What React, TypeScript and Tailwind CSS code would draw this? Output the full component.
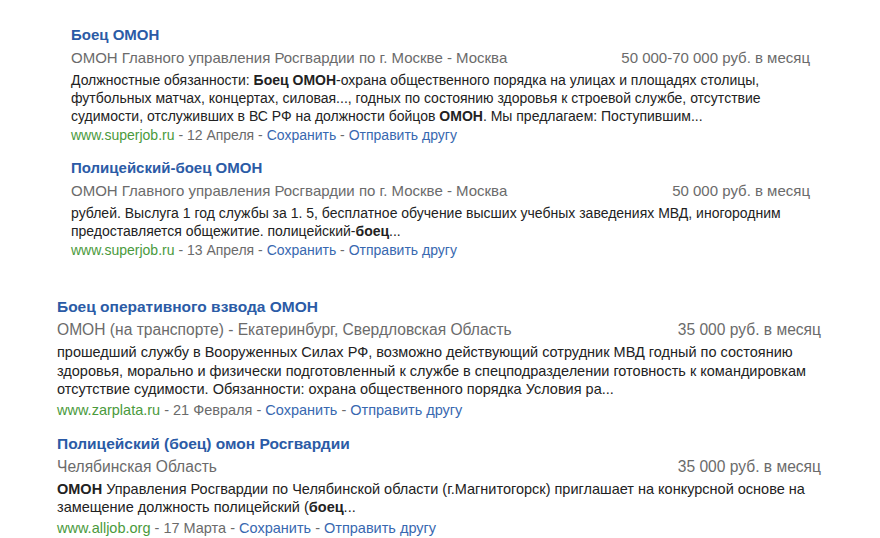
import React from 'react';

interface Vacancy {
  title: string;
  company: string;
  salary: string;
  lines: React.ReactNode[];
  site: string;
  date: string;
}

const first: Vacancy[] = [
  {
    title: 'Боец ОМОН',
    company: 'ОМОН Главного управления Росгвардии по г. Москве - Москва',
    salary: '50 000-70 000 руб. в месяц',
    lines: [
      <>Должностные обязанности: <b>Боец ОМОН</b>-охрана общественного порядка на улицах и площадях столицы,</>,
      <>футбольных матчах, концертах, силовая..., годных по состоянию здоровья к строевой службе, отсутствие</>,
      <>судимости, отслуживших в ВС РФ на должности бойцов <b>ОМОН</b>. Мы предлагаем: Поступившим...</>,
    ],
    site: 'www.superjob.ru',
    date: '12 Апреля',
  },
  {
    title: 'Полицейский-боец ОМОН',
    company: 'ОМОН Главного управления Росгвардии по г. Москве - Москва',
    salary: '50 000 руб. в месяц',
    lines: [
      <>рублей. Выслуга 1 год службы за 1. 5, бесплатное обучение высших учебных заведениях МВД, иногородним</>,
      <>предоставляется общежитие. полицейский-<b>боец</b>...</>,
    ],
    site: 'www.superjob.ru',
    date: '13 Апреля',
  },
];

const second: Vacancy[] = [
  {
    title: 'Боец оперативного взвода ОМОН',
    company: 'ОМОН (на транспорте) - Екатеринбург, Свердловская Область',
    salary: '35 000 руб. в месяц',
    lines: [
      <>прошедший службу в Вооруженных Силах РФ, возможно действующий сотрудник МВД годный по состоянию</>,
      <>здоровья, морально и физически подготовленный к службе в спецподразделении готовность к командировкам</>,
      <>отсутствие судимости. Обязанности: охрана общественного порядка Условия ра...</>,
    ],
    site: 'www.zarplata.ru',
    date: '21 Февраля',
  },
  {
    title: 'Полицейский (боец) омон Росгвардии',
    company: 'Челябинская Область',
    salary: '35 000 руб. в месяц',
    lines: [
      <><b>ОМОН</b> Управления Росгвардии по Челябинской области (г.Магнитогорск) приглашает на конкурсной основе на</>,
      <>замещение должность полицейский (<b>боец</b>...</>,
    ],
    site: 'www.alljob.org',
    date: '17 Марта',
  },
];

// second block of the screenshot is scaled up a little, so fonts go up ~4%
function VacancyItem({ v, big }: { v: Vacancy; big?: boolean }) {
  return (
    <div className="flex flex-col">
      <div className={`font-bold leading-[18px] text-[#2b5ba6] ${big ? 'text-[15.5px]' : 'text-[15px]'}`}>
        {v.title}
      </div>
      <div
        className={`mt-[5px] flex items-center justify-between leading-[18px] text-[#6b6b6b] ${
          big ? 'text-[15.6px]' : 'text-[15px]'
        }`}
      >
        <span>{v.company}</span>
        <span>{v.salary}</span>
      </div>
      <div
        className={`mt-[4px] text-[#222] ${big ? 'text-[14.5px] leading-[18.5px]' : 'text-[14px] leading-[18px]'}`}
      >
        {v.lines.map((l, i) => (
          <div key={i}>{l}</div>
        ))}
      </div>
      <div
        className={`leading-[16px] text-[#6b6b6b] ${big ? 'mt-[3px] text-[14.5px]' : 'mt-[2px] text-[14px]'}`}
      >
        <span className="text-[#4a9a3c]">{v.site}</span> - {v.date} -{' '}
        <span className="text-[#3868b0]">Сохранить</span> -{' '}
        <span className="text-[#3868b0]">Отправить другу</span>
      </div>
    </div>
  );
}

export default function App() {
  return (
    <div
      className="h-[538px] w-[880px] overflow-hidden bg-white"
      style={{ fontFamily: '"Liberation Sans", Arial, sans-serif' }}
    >
      <div className="ml-[71px] mt-[26px] flex w-[739px] flex-col gap-[16px]">
        {first.map((v, i) => (
          <VacancyItem key={i} v={v} />
        ))}
      </div>
      <div className="ml-[57px] mt-[40px] flex w-[764px] flex-col gap-[17px]">
        {second.map((v, i) => (
          <VacancyItem key={i} v={v} big />
        ))}
      </div>
    </div>
  );
}
